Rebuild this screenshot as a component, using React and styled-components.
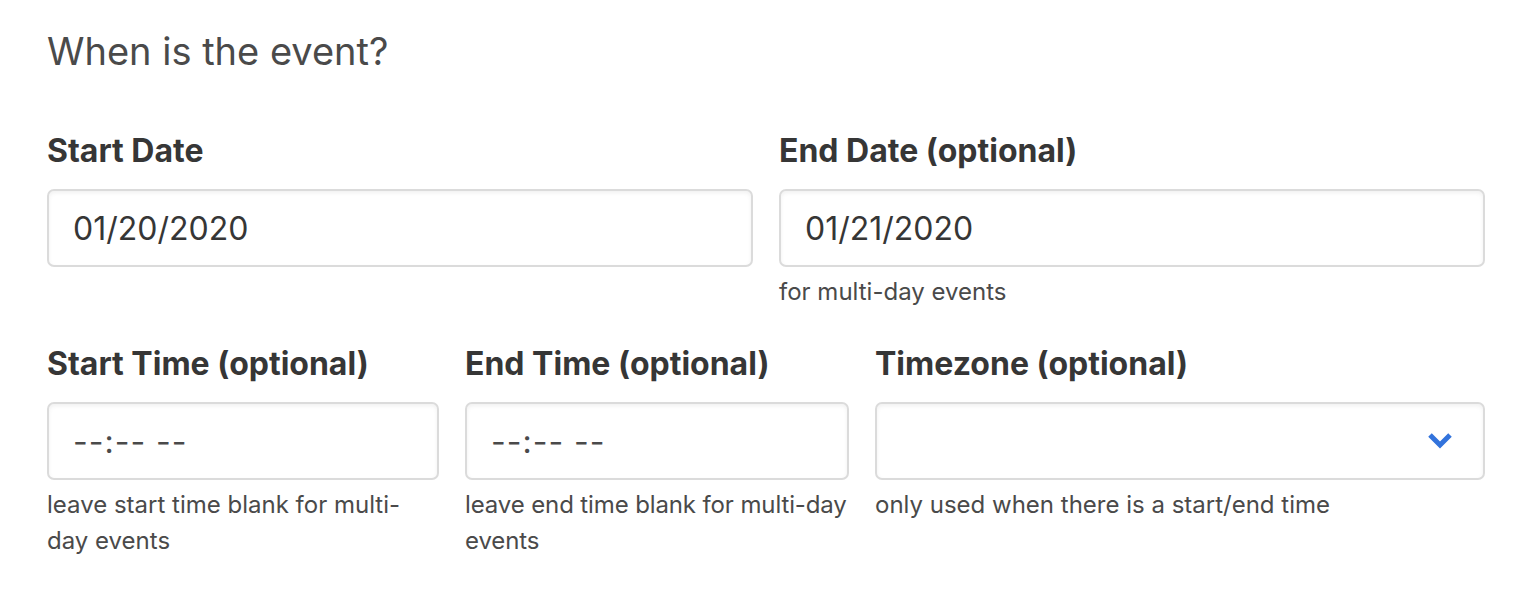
import React from 'react';
import styled, { createGlobalStyle } from 'styled-components';

const GlobalStyle = createGlobalStyle`
    body {
        margin: 0;
        background: #ffffff;
        font-family: Inter, "Liberation Sans", sans-serif;
    }
`;

export default function App() {
    return (
        <Page>
            <GlobalStyle />
            <Title>When is the event?</Title>

            <Row columns="1fr 1fr">
                <Field>
                    <Label>Start Date</Label>
                    <InputBox>01/20/2020</InputBox>
                </Field>
                <Field>
                    <Label>End Date (optional)</Label>
                    <InputBox>01/21/2020</InputBox>
                    <Help>for multi-day events</Help>
                </Field>
            </Row>

            <Row columns="392px 384px 1fr">
                <Field>
                    <Label>Start Time (optional)</Label>
                    <InputBox empty>--:-- --</InputBox>
                    <Help>leave start time blank for multi-day events</Help>
                </Field>
                <Field>
                    <Label>End Time (optional)</Label>
                    <InputBox empty>--:-- --</InputBox>
                    <Help tight>leave end time blank for multi-day events</Help>
                </Field>
                <Field>
                    <Label>Timezone (optional)</Label>
                    <SelectBox>
                        <Arrow viewBox="0 0 26 18">
                            <polyline points="3,3 13,13 23,3" />
                        </Arrow>
                    </SelectBox>
                    <Help>only used when there is a start/end time</Help>
                </Field>
            </Row>
        </Page>
    );
}

const Page = styled.div`
    width: 1438px;
    padding: 23px 49px 0 47px;
`;

const Title = styled.h2`
    margin: 0 0 48px 0;
    font-size: 38px;
    line-height: 56px;
    font-weight: 400;
    color: #4a4a4a;
`;

const Row = styled.div`
    display: grid;
    grid-template-columns: ${(props) => props.columns};
    column-gap: 26px;
    margin-bottom: 30px;
`;

const Field = styled.div`
    display: flex;
    flex-direction: column;
    min-width: 0;
`;

const Label = styled.label`
    font-size: 32px;
    line-height: 48px;
    font-weight: 700;
    color: #363636;
    margin-bottom: 14px;
`;

const InputBox = styled.div`
    box-sizing: border-box;
    height: 78px;
    display: flex;
    align-items: center;
    padding: 0 24px;
    border: 2px solid #dbdbdb;
    border-radius: 7px;
    box-shadow: inset 0 2px 4px rgba(10, 10, 10, 0.06);
    font-size: 32px;
    color: ${(props) => (props.empty ? '#4a4a4a' : '#363636')};
    letter-spacing: ${(props) => (props.empty ? '1px' : '0')};
`;

const SelectBox = styled(InputBox)`
    justify-content: flex-end;
    padding-right: 30px;
`;

const Arrow = styled.svg`
    width: 26px;
    height: 18px;
    fill: none;
    stroke: #3273dc;
    stroke-width: 5;
`;

const Help = styled.p`
    margin: 7px 0 0 0;
    font-size: 24px;
    line-height: 36px;
    letter-spacing: ${(props) => (props.tight ? '-0.12px' : '0')};
    color: #4a4a4a;
`;
